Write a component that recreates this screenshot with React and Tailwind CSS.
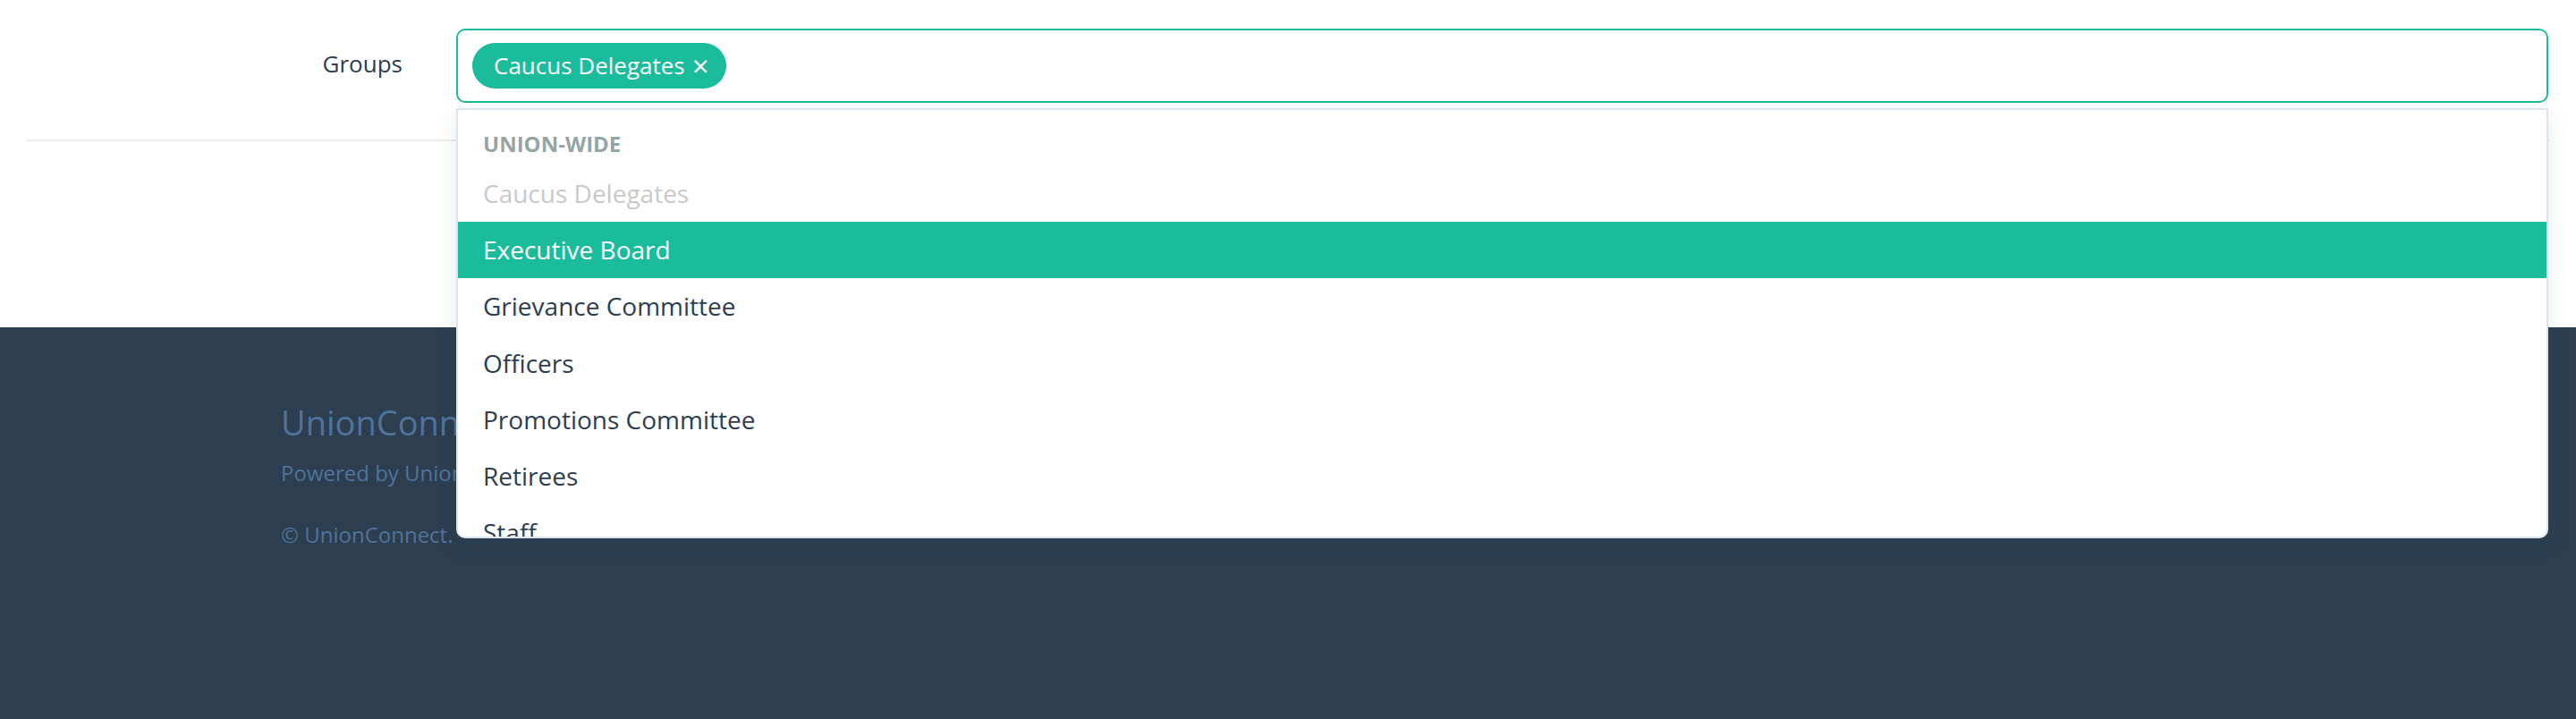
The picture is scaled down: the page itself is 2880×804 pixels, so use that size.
import { useState } from 'react';

const GROUPS = [
  { name: 'Caucus Delegates', disabled: true },
  { name: 'Executive Board' },
  { name: 'Grievance Committee' },
  { name: 'Officers' },
  { name: 'Promotions Committee' },
  { name: 'Retirees' },
  { name: 'Staff' },
  { name: 'Stewards' },
  { name: 'Trustees' },
];

function GroupOption({ group, active, onHover }) {
  let tone = 'text-[#2c3e50]';
  if (group.disabled) tone = 'text-[#c9c9c9]';
  else if (active) tone = 'bg-[#1abc9c] text-white';

  return (
    <div
      onMouseEnter={onHover}
      className={`h-[63.2px] px-[28px] text-[28px] leading-[63.2px] whitespace-nowrap ${tone}`}
    >
      {group.name}
    </div>
  );
}

function GroupSelect() {
  const [active, setActive] = useState('Executive Board');

  return (
    <div className="relative flex-1">
      <div className="h-[83px] flex items-center px-[16px] border-2 border-[#1abc9c] rounded-[10px] bg-white">
        <span className="h-[51px] inline-flex items-center pl-[24px] pr-[19px] rounded-full bg-[#1abc9c] text-white text-[26px] whitespace-nowrap">
          Caucus Delegates
          <span className="ml-[8px] text-[33px] leading-none">×</span>
        </span>
      </div>

      <div className="absolute left-0 right-0 top-[89px] z-10 h-[481px] overflow-hidden bg-white border-2 border-[#dce4ec] rounded-b-[10px] shadow-[0_6px_24px_rgba(44,62,80,0.10)]">
        <div className="pt-[26px] pb-[12px] px-[28px] text-[24px] leading-[24px] font-bold uppercase text-[#95a5a6]">
          Union-wide
        </div>
        {GROUPS.map((g) => (
          <GroupOption
            key={g.name}
            group={g}
            active={!g.disabled && active === g.name}
            onHover={() => !g.disabled && setActive(g.name)}
          />
        ))}
      </div>
    </div>
  );
}

export default function App() {
  return (
    <div className="min-h-[804px] flex flex-col bg-white font-['Open_Sans','Noto_Sans',sans-serif]">
      <section className="h-[366px] pt-[32px]">
        <div className="mx-[29px] pb-[41px] border-b-2 border-[#ececec]">
          <div className="flex items-start gap-[60px] pr-[2px]">
            <label className="w-[421px] shrink-0 pt-[18px] text-right text-[26px] leading-[42px] text-[#2c3e50]">
              Groups
            </label>
            <GroupSelect />
          </div>
        </div>
      </section>

      <footer className="flex-1 bg-[#2c3e50] text-[#51739a]">
        <div className="mx-auto max-w-[2252px] pt-[83px] pb-[120px]">
          <h3 className="text-[38px] leading-[46px]">UnionConnect</h3>
          <p className="mt-[16px] text-[24px] leading-[36px]">Powered by UnionConnect</p>
          <p className="mt-[33px] text-[24px] leading-[36px]">© UnionConnect.</p>
        </div>
      </footer>
    </div>
  );
}
